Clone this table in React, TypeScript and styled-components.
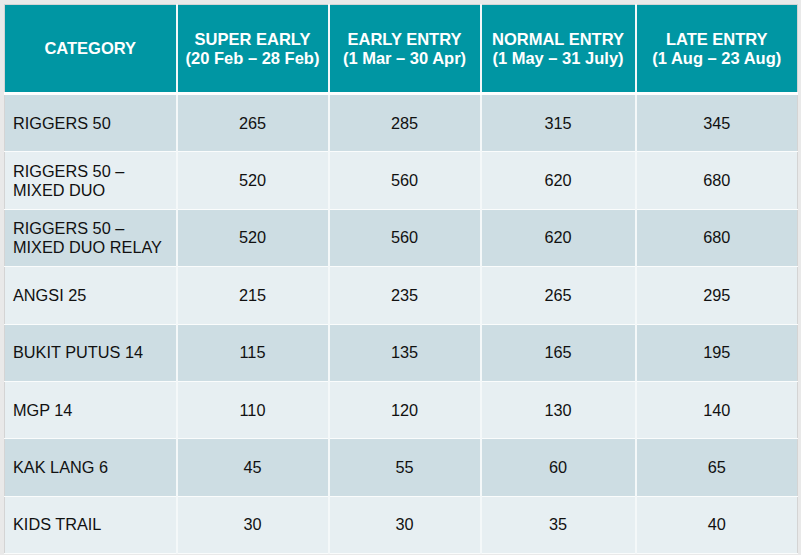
import React from 'react';
import styled, { createGlobalStyle } from 'styled-components';

const GlobalStyle = createGlobalStyle`
  html, body {
    margin: 0;
    padding: 0;
    background: #e9e9e9;
  }
  body {
    font-family: 'Liberation Sans', Arial, sans-serif;
  }
`;

const Page = styled.div`
  width: 801px;
  height: 555px;
  padding: 4px 0 0 4px;
  box-sizing: border-box;
`;

const Table = styled.table`
  border-collapse: collapse;
  table-layout: fixed;
  width: 793px;
  background: #fff;
  border: 1px solid #d4d4d4;
`;

const Col = styled.col<{ $w: number }>`
  width: ${p => p.$w}px;
`;

const HeadCell = styled.th`
  height: 89px;
  box-sizing: border-box;
  background: #0096a3;
  color: #fff;
  font-size: 16.5px;
  font-weight: bold;
  line-height: 19px;
  text-align: center;
  vertical-align: middle;
  padding: 0;
  border-right: 2px solid #f2f8f9;
  border-bottom: 3px solid #fff;
  &:last-child {
    border-right: none;
  }
`;

const Row = styled.tr<{ $odd: boolean }>`
  background: ${p => (p.$odd ? '#cddde3' : '#e7eff2')};
`;

const Cell = styled.td<{ $first?: boolean }>`
  height: 56.4px;
  padding: 0 0 0 ${p => (p.$first ? '8px' : '0')};
  text-align: ${p => (p.$first ? 'left' : 'center')};
  vertical-align: middle;
  font-size: 16.3px;
  line-height: 19px;
  color: #111;
  border-right: 2px solid #f4f8f9;
  border-bottom: 1px solid #fafcfc;
  &:last-child {
    border-right: none;
  }
`;

const widths = [172, 152, 152, 155, 162];

const headers: React.ReactNode[] = [
  'CATEGORY',
  <>SUPER EARLY<br />(20 Feb – 28 Feb)</>,
  <>EARLY ENTRY<br />(1 Mar – 30 Apr)</>,
  <>NORMAL ENTRY<br />(1 May – 31 July)</>,
  <>LATE ENTRY<br />(1 Aug – 23 Aug)</>,
];

const rows: { name: React.ReactNode; prices: number[] }[] = [
  { name: 'RIGGERS 50', prices: [265, 285, 315, 345] },
  { name: <>RIGGERS 50 –<br />MIXED DUO</>, prices: [520, 560, 620, 680] },
  { name: <>RIGGERS 50 –<br />MIXED DUO RELAY</>, prices: [520, 560, 620, 680] },
  { name: 'ANGSI 25', prices: [215, 235, 265, 295] },
  { name: 'BUKIT PUTUS 14', prices: [115, 135, 165, 195] },
  { name: 'MGP 14', prices: [110, 120, 130, 140] },
  { name: 'KAK LANG 6', prices: [45, 55, 60, 65] },
  { name: 'KIDS TRAIL', prices: [30, 30, 35, 40] },
];

export default function App() {
  return (
    <Page>
      <GlobalStyle />
      <Table>
        <colgroup>
          {widths.map((w, i) => (
            <Col key={i} $w={w} />
          ))}
        </colgroup>
        <thead>
          <tr>
            {headers.map((h, i) => (
              <HeadCell key={i}>{h}</HeadCell>
            ))}
          </tr>
        </thead>
        <tbody>
          {rows.map((r, i) => (
            <Row key={i} $odd={i % 2 === 0}>
              <Cell $first>{r.name}</Cell>
              {r.prices.map((p, j) => (
                <Cell key={j}>{p}</Cell>
              ))}
            </Row>
          ))}
        </tbody>
      </Table>
    </Page>
  );
}
